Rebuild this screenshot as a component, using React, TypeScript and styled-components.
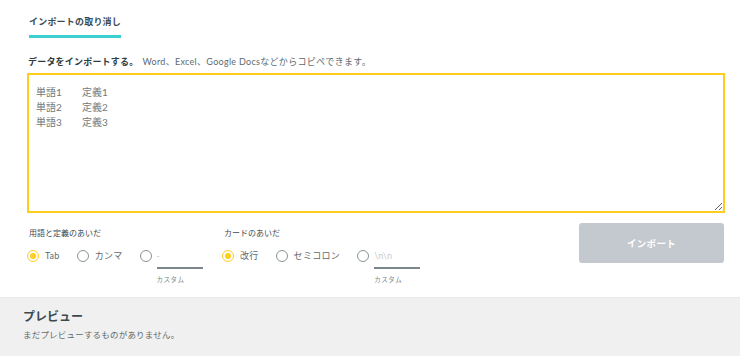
import React from "react";
import styled, { createGlobalStyle } from "styled-components";

const Global = createGlobalStyle`
  html, body { margin: 0; padding: 0; background: #fff; }
  body { font-family: "Lato", "Noto Sans CJK JP", sans-serif; color: #455358; }
  * { box-sizing: border-box; }
`;

const Page = styled.div`
  width: 740px;
  height: 356px;
  overflow: hidden;
  display: flex;
  flex-direction: column;
`;

const Main = styled.div`
  padding: 0 15px 0 27px;
  height: 297px;
`;

const Tabs = styled.div`
  display: flex;
  padding-top: 16px;
  margin-left: 2px;
`;

const Tab = styled.div`
  font-size: 9px;
  font-weight: 700;
  color: #3b4a50;
  letter-spacing: 0.2px;
  white-space: nowrap;
  padding-bottom: 7px;
  border-bottom: 3px solid #3ccfcf;
  width: 92px;
  line-height: 12px;
`;

const Heading = styled.div`
  margin-top: 19px;
  margin-left: 1px;
  font-size: 9px;
  line-height: 10px;
  color: #5d6a6f;
  letter-spacing: 0.3px;
  white-space: nowrap;
  b { color: #2e3b40; font-weight: 700; margin-right: 4px; letter-spacing: 0.2px; }
`;

const Area = styled.textarea`
  display: block;
  margin-top: 6px;
  width: 698px;
  height: 140px;
  border: 2px solid #ffcd1f;
  border-radius: 0;
  padding: 10px 7px 8px;
  font-family: "Lato", "Noto Sans CJK JP", sans-serif;
  font-size: 10px;
  line-height: 15px;
  color: #6f7a7e;
  resize: vertical;
  outline: none;
  tab-size: 46px;
  white-space: pre;
`;

const Options = styled.div`
  display: flex;
  align-items: flex-start;
  margin-top: 10px;
`;

const Group = styled.div<{ $w: number }>`
  width: ${(p) => p.$w}px;
  display: flex;
  flex-direction: column;
`;

const GroupLabel = styled.div`
  font-size: 8px;
  line-height: 10px;
  margin-top: 5px;
  margin-left: 2px;
  color: #3b4a50;
`;

const RadioRow = styled.div`
  display: flex;
  align-items: flex-start;
  margin-top: 12px;
`;

const Option = styled.label`
  display: flex;
  align-items: center;
  margin-right: 17px;
  font-size: 9px;
  letter-spacing: 0.3px;
  line-height: 12px;
  height: 12px;
  color: #5d6a6f;
  white-space: nowrap;
`;

const Circle = styled.span<{ $on?: boolean }>`
  width: 12px;
  height: 12px;
  border-radius: 50%;
  border: 1.5px solid ${(p) => (p.$on ? "#ffcd1f" : "#8a9396")};
  margin-right: 6px;
  display: flex;
  align-items: center;
  justify-content: center;
  flex-shrink: 0;
  &::after {
    content: "";
    display: ${(p) => (p.$on ? "block" : "none")};
    width: 6px;
    height: 6px;
    border-radius: 50%;
    background: #ffcd1f;
  }
`;

const CustomWrap = styled.div`
  display: flex;
  flex-direction: column;
  margin-left: -1px;
`;

const CustomInput = styled.div<{ $w: number }>`
  width: ${(p) => p.$w}px;
  height: 19px;
  border-bottom: 2px solid #7b878b;
  font-size: 9px;
  line-height: 12px;
  color: #c5cbce;
`;

const CustomLabel = styled.div`
  font-size: 6.5px;
  line-height: 8px;
  margin-top: 7px;
  color: #7b878b;
  letter-spacing: 0.5px;
`;

const ImportButton = styled.button`
  margin-left: auto;
  width: 145px;
  height: 40px;
  border: none;
  border-radius: 3px;
  background: #c3c9ce;
  color: #fff;
  font-family: "Lato", "Noto Sans CJK JP", sans-serif;
  font-weight: 700;
  font-size: 9.5px;
  letter-spacing: 0.3px;
  margin-right: 1px;
`;

const Preview = styled.div`
  flex: 1;
  background: #f0f0f0;
  border-top: 1px solid #e9e9e9;
  padding: 11px 23px;
`;

const PreviewTitle = styled.div`
  font-size: 12px;
  font-weight: 700;
  line-height: 15px;
  color: #3b4a50;
`;

const PreviewText = styled.div`
  margin-top: 6px;
  font-size: 8.5px;
  line-height: 11px;
  color: #5d6a6f;
  letter-spacing: 0.2px;
`;

type Opt = { label: string; on?: boolean };

function RadioGroup({ title, opts, custom, width }: { title: string; opts: Opt[]; custom: string; width: number }) {
  return (
    <Group $w={width}>
      <GroupLabel>{title}</GroupLabel>
      <RadioRow>
        {opts.map((o) => (
          <Option key={o.label}>
            <Circle $on={o.on} />
            {o.label}
          </Option>
        ))}
        <Option style={{ marginRight: 0 }}>
          <Circle />
        </Option>
        <CustomWrap>
          <CustomInput $w={46}>{custom}</CustomInput>
          <CustomLabel>カスタム</CustomLabel>
        </CustomWrap>
      </RadioRow>
    </Group>
  );
}

export default function App() {
  return (
    <Page>
      <Global />
      <Main>
        <Tabs>
          <Tab>インポートの取り消し</Tab>
        </Tabs>
        <Heading>
          <b>データをインポートする。</b>Word、Excel、Google Docsなどからコピペできます。
        </Heading>
        <Area defaultValue={"単語1\t定義1\n単語2\t定義2\n単語3\t定義3"} />
        <Options>
          <RadioGroup
            width={195}
            title="用語と定義のあいだ"
            opts={[{ label: "Tab", on: true }, { label: "カンマ" }]}
            custom="-"
          />
          <RadioGroup
            width={220}
            title="カードのあいだ"
            opts={[{ label: "改行", on: true }, { label: "セミコロン" }]}
            custom="\n\n"
          />
          <ImportButton>インポート</ImportButton>
        </Options>
      </Main>
      <Preview>
        <PreviewTitle>プレビュー</PreviewTitle>
        <PreviewText>まだプレビューするものがありません。</PreviewText>
      </Preview>
    </Page>
  );
}
